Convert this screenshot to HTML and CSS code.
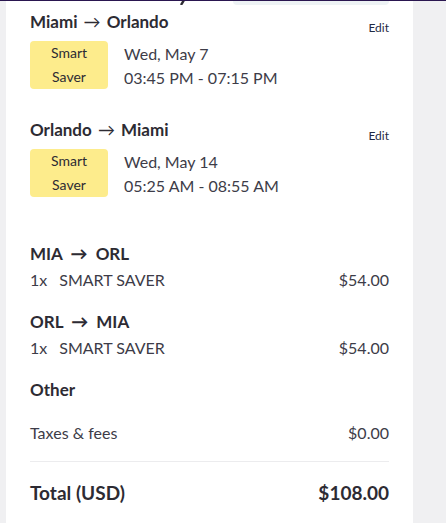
FILE: index.html
```html
<!DOCTYPE html>
<html lang="en">
<head>
    <meta charset="UTF-8">
    <meta name="viewport" content="width=device-width, initial-scale=1.0">
    <title>Trip summary</title>
    <link rel="stylesheet" href="styles.css">
</head>
<body>
    <div class="panel">
        <div class="panel-top">
            <svg class="title-tail" width="12" height="5" viewBox="0 0 12 5">
                <path d="M10 0 L7 5" stroke="#2d2b33" stroke-width="2.4" fill="none"/>
            </svg>
            <div class="panel-pill"></div>
        </div>

        <div class="leg">
            <div class="leg-head">
                <h3>Miami <span class="arrow">&rarr;</span> Orlando</h3>
                <a class="edit" href="#">Edit</a>
            </div>
            <div class="leg-body">
                <div class="badge">Smart<br>Saver</div>
                <div class="leg-time">
                    <p>Wed, May 7</p>
                    <p>03:45 PM - 07:15 PM</p>
                </div>
            </div>
        </div>

        <div class="leg">
            <div class="leg-head">
                <h3>Orlando <span class="arrow">&rarr;</span> Miami</h3>
                <a class="edit" href="#">Edit</a>
            </div>
            <div class="leg-body">
                <div class="badge">Smart<br>Saver</div>
                <div class="leg-time">
                    <p>Wed, May 14</p>
                    <p>05:25 AM - 08:55 AM</p>
                </div>
            </div>
        </div>

        <div class="prices">
            <div class="price-group">
                <h4>MIA <span class="arrow-bold">&rarr;</span> ORL</h4>
                <div class="price-row">
                    <span><span class="qty">1x</span>SMART SAVER</span>
                    <span>$54.00</span>
                </div>
            </div>
            <div class="price-group">
                <h4>ORL <span class="arrow-bold">&rarr;</span> MIA</h4>
                <div class="price-row">
                    <span><span class="qty">1x</span>SMART SAVER</span>
                    <span>$54.00</span>
                </div>
            </div>
            <div class="price-group">
                <h4>Other</h4>
                <div class="price-row other-row">
                    <span>Taxes &amp; fees</span>
                    <span>$0.00</span>
                </div>
            </div>
            <div class="total-row">
                <span>Total (USD)</span>
                <span>$108.00</span>
            </div>
        </div>
    </div>
</body>
</html>
```

FILE: styles.css
```css
* {
    margin: 0;
    padding: 0;
    box-sizing: border-box;
}
body {
    font-family: Lato, "Open Sans", sans-serif;
    background-color: #f0f0f2;
    border-top: 1px solid #2a1650;
    color: #3d3c48;
}
.panel {
    width: 407px;
    margin-left: 6px;
    background: #fff;
    padding: 0 24px 30px 24px;
    min-height: 522px;
}
.panel-top {
    display: flex;
    height: 4px;
    overflow: hidden;
}
.title-tail {
    display: block;
    margin-left: 144px;
    margin-top: -1px;
}
.panel-pill {
    margin-left: auto;
    width: 156px;
    height: 4px;
    background: #eef3f5;
    border-radius: 0 0 5px 5px;
}
.leg {
    margin-top: 5px;
    margin-bottom: 28px;
}
.leg-head {
    display: flex;
    justify-content: space-between;
    align-items: flex-start;
    height: 24px;
}
.leg-head h3 {
    font-size: 17px;
    line-height: 24px;
    font-weight: 700;
    color: #2d2b33;
}
.arrow {
    font-weight: 400;
    margin: 0 2px;
}
.edit {
    font-size: 12px;
    line-height: 14px;
    margin-top: 11px;
    color: #1f2a44;
    text-decoration: none;
}
.leg-body {
    display: flex;
    align-items: flex-start;
    gap: 16px;
    margin-top: 7px;
}
.badge {
    background: #fdec8c;
    border-radius: 4px;
    padding: 0 21px;
    font-size: 14px;
    line-height: 24px;
    text-align: center;
    color: #2d2b33;
}
.leg-time {
    padding-top: 1px;
}
.leg-time p {
    font-size: 16px;
    line-height: 24px;
}
.prices {
    margin-top: 44px;
}
.price-group {
    margin-bottom: 16px;
}
.price-group h4 {
    font-size: 17px;
    line-height: 24px;
    font-weight: 700;
    color: #2d2b33;
}
.arrow-bold {
    margin: 0 4px;
    font-weight: 900;
}
.price-row {
    display: flex;
    justify-content: space-between;
    font-size: 16px;
    line-height: 28px;
}
.qty {
    margin-right: 12px;
}
.other-row {
    margin-top: 17px;
    padding-bottom: 14px;
    border-bottom: 1px solid #ececee;
}
.total-row {
    display: flex;
    justify-content: space-between;
    font-size: 19px;
    line-height: 24px;
    font-weight: 700;
    color: #2d2b33;
    margin-top: 19px;
}
```
